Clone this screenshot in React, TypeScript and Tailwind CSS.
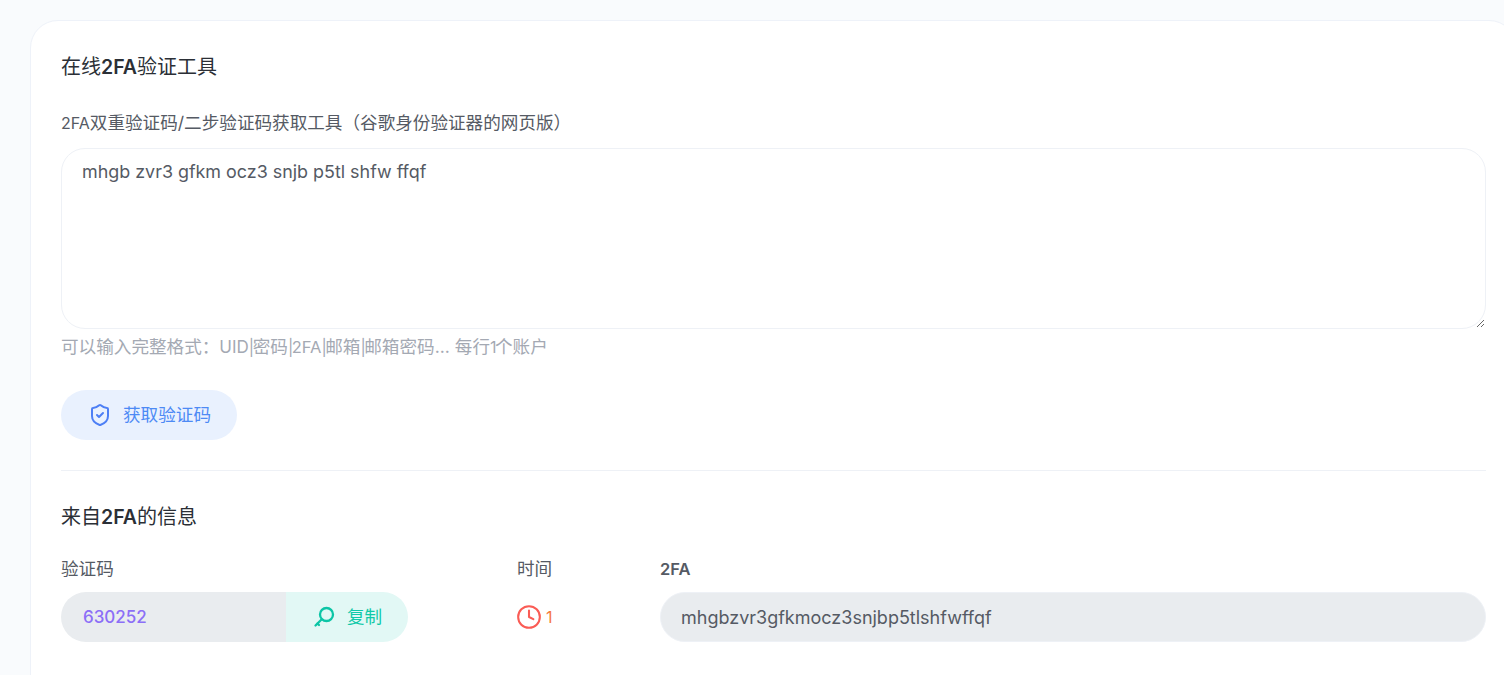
import { Clock, ShieldCheck } from 'lucide-react';

const font = "[font-family:Inter,'Noto_Sans_CJK_SC',sans-serif]";

function CopyIcon() {
  return (
    <svg width="22" height="22" viewBox="0 0 22 22" fill="none" stroke="#0cc5a6" strokeWidth="2.3" strokeLinecap="round">
      <circle cx="13.5" cy="8.5" r="6.5" />
      <path d="M8.5 13.5 L2.5 19.5" />
      <path d="M4.5 17.5 L6 19" />
    </svg>
  );
}

// latin runs sit a bit smaller than the CJK around them
function Pipe() {
  return <span className="text-[16px] tracking-[-1.5px]">|</span>;
}

export default function App() {
  return (
    <div className={`h-[675px] w-[1504px] overflow-hidden bg-[#f9fbfd] pl-[30px] pt-[20px] ${font}`}>
      <div className="w-[1487px] rounded-[28px] border border-[#eef2f9] bg-white px-[30px] pt-[31px] pb-[60px]">
        <h1 className="text-[20px] leading-[30px] text-[#2b2f36]">
          在线<span className="text-[19.5px] font-semibold">2FA</span>验证工具
        </h1>

        <label className="mt-[29px] block text-[17.6px] leading-[24px] text-[#555a64]">
          <span className="text-[16px]">2FA</span>双重验证码/二步验证码获取工具（谷歌身份验证器的网页版）
        </label>
        <textarea
          readOnly
          defaultValue="mhgb zvr3 gfkm ocz3 snjb p5tl shfw ffqf"
          className="mt-[13px] block h-[181px] w-full resize-y rounded-[24px] border border-[#eef1f6] bg-white px-[20px] py-[11px] text-[17.9px] leading-[24px] text-[#555a64] outline-none"
        />
        <p className="mt-[6px] text-[17.6px] leading-[24px] text-[#a4a9b3]">
          可以输入完整格式：<span className="text-[17px]">UID</span><Pipe />密码<Pipe /><span className="text-[16.5px]">2FA</span><Pipe />邮箱<Pipe />邮箱密码... 每行<span className="text-[16px] tracking-[-1.5px]">1</span>个账户
        </p>

        <button className="mt-[31px] flex h-[50px] w-[176px] items-center rounded-full bg-[#e9f1fe] pl-[27px] text-[17.6px] text-[#4d8af5]">
          <ShieldCheck size={24} strokeWidth={2} className="text-[#4d7ff5]" />
          <span className="ml-[11px]">获取验证码</span>
        </button>

        <div className="mt-[30px] border-t border-[#eef1f6]" />

        <h2 className="mt-[31px] text-[20px] leading-[30px] text-[#2b2f36]">
          来自<span className="text-[19.5px] font-semibold">2FA</span>的信息
        </h2>

        <div className="mt-[25px] flex">
          <div className="w-[456px]">
            <div className="text-[17.6px] leading-[24px] text-[#555a64]">验证码</div>
            <div className="mt-[11px] flex h-[50px] w-[347px] overflow-hidden rounded-full">
              <div className="flex w-[225px] items-center bg-[#e9ecef] pl-[22px] pt-px text-[17px] font-medium text-[#8c6ff7]">630252</div>
              <button className="flex flex-1 items-center bg-[#e2f8f5] pl-[27px] text-[17.6px] text-[#10c9a8]">
                <CopyIcon />
                <span className="ml-[12px]">复制</span>
              </button>
            </div>
          </div>
          <div className="w-[143px]">
            <div className="text-[17.6px] leading-[24px] text-[#555a64]">时间</div>
            <div className="mt-[11px] flex h-[50px] items-center text-[16px] text-[#f5793c]">
              <Clock size={26} strokeWidth={1.9} className="-ml-px text-[#fa5c55]" />
              <span className="ml-[4px]">1</span>
            </div>
          </div>
          <div className="flex-1">
            <div className="text-[16.5px] leading-[24px] font-semibold text-[#555a64]">2FA</div>
            <input
              readOnly
              defaultValue="mhgbzvr3gfkmocz3snjbp5tlshfwffqf"
              className="mt-[11px] block h-[50px] w-full rounded-full border border-[#eef1f6] bg-[#e9ecef] px-[20px] text-[18px] text-[#555a64] outline-none"
            />
          </div>
        </div>
      </div>
    </div>
  );
}
